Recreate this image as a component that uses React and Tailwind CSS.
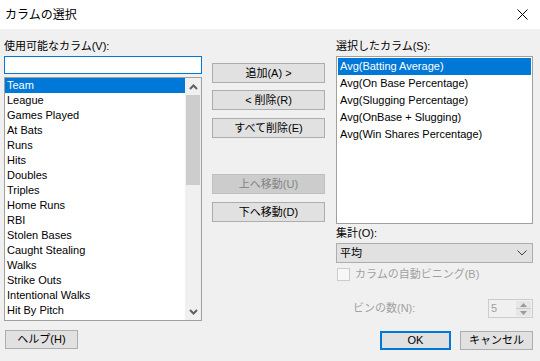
// Column chooser dialog
// title bar, available columns list, move buttons, selected columns, aggregate + binning options

const available = [
  "Team",
  "League",
  "Games Played",
  "At Bats",
  "Runs",
  "Hits",
  "Doubles",
  "Triples",
  "Home Runs",
  "RBI",
  "Stolen Bases",
  "Caught Stealing",
  "Walks",
  "Strike Outs",
  "Intentional Walks",
  "Hit By Pitch",
];

const selected = [
  "Avg(Batting Average)",
  "Avg(On Base Percentage)",
  "Avg(Slugging Percentage)",
  "Avg(OnBase + Slugging)",
  "Avg(Win Shares Percentage)",
];

const Button = ({ children, className = "", disabled = false }) => (
  <div
    className={`flex items-center justify-center border ${
      disabled
        ? "bg-[#cccccc] border-[#bfbfbf] text-[#838383]"
        : "bg-[#e1e1e1] border-[#adadad] text-black"
    } ${className}`}
  >
    {children}
  </div>
);

const Chevron = ({ up }) => (
  <svg width="9" height="6" viewBox="0 0 9 6">
    <path
      d={up ? "M1 5 L4.5 1.5 L8 5" : "M1 1 L4.5 4.5 L8 1"}
      fill="none"
      stroke="#606060"
      strokeWidth="2"
    />
  </svg>
);

export default function App() {
  return (
    <div
      className="w-[540px] h-[361px] flex flex-col bg-[#f0f0f0] text-[11px] text-black overflow-hidden"
      style={{ fontFamily: '"Liberation Sans", "Noto Sans CJK JP", sans-serif' }}
    >
      {/* title bar */}
      <div className="h-[29px] bg-white flex items-center justify-between pl-[5px] pr-[12px]">
        <span className="text-[12px] leading-none">カラムの選択</span>
        <svg width="11" height="11" viewBox="0 0 11 11">
          <path d="M0.5 0.5 L10.5 10.5 M10.5 0.5 L0.5 10.5" stroke="#000" strokeWidth="1" />
        </svg>
      </div>

      <div className="flex pt-[10px] pl-[4px]">
        {/* left column */}
        <div className="w-[198px] flex flex-col">
          <div className="h-[15px] leading-[15px]">使用可能なカラム(V):</div>
          <div className="mt-[2px] h-[18px] border border-[#0078d7] bg-white" />
          <div className="mt-[3px] h-[244px] border border-[#a0a0a0] bg-white flex">
            <div className="flex-1 flex flex-col">
              {available.map((name, i) => (
                <div
                  key={name}
                  className={`h-[15px] leading-[15px] pl-[2px] text-[11px] ${
                    i === 0 ? "bg-[#0078d7] text-white" : ""
                  }`}
                >
                  {name}
                </div>
              ))}
            </div>
            {/* scrollbar */}
            <div className="w-[16px] bg-[#f0f0f0] flex flex-col">
              <div className="h-[17px] flex items-center justify-center">
                <Chevron up />
              </div>
              <div className="h-[90px] mx-px bg-[#cdcdcd]" />
              <div className="flex-1" />
              <div className="h-[17px] flex items-center justify-center">
                <Chevron />
              </div>
            </div>
          </div>
          <Button className="mt-[9px] ml-px w-[73px] h-[19px]">ヘルプ(H)</Button>
        </div>

        {/* middle buttons */}
        <div className="w-[113px] ml-[10px] flex flex-col pt-[24px]">
          <Button className="h-[20px]">追加(A) &gt;</Button>
          <Button className="h-[20px] mt-[7px]">&lt; 削除(R)</Button>
          <Button className="h-[20px] mt-[8px]">すべて削除(E)</Button>
          <Button className="h-[20px] mt-[36px]" disabled>
            上へ移動(U)
          </Button>
          <Button className="h-[20px] mt-[8px]">下へ移動(D)</Button>
        </div>

        {/* right column */}
        <div className="w-[197px] ml-[11px] flex flex-col">
          <div className="h-[15px] leading-[15px]">選択したカラム(S):</div>
          <div className="mt-[2px] h-[168px] border border-[#a0a0a0] bg-white p-px flex flex-col">
            {selected.map((name, i) => (
              <div
                key={name}
                className={`h-[17px] leading-[17px] pl-[2px] ${
                  i === 0 ? "bg-[#0078d7] text-white" : ""
                }`}
              >
                {name}
              </div>
            ))}
          </div>
          <div className="mt-[2px] h-[15px] leading-[15px]">集計(O):</div>
          <div className="mt-[2px] h-[20px] border border-[#adadad] bg-[#e1e1e1] flex items-center justify-between pl-[3px] pr-[5px]">
            <span>平均</span>
            <svg width="10" height="6" viewBox="0 0 10 6">
              <path d="M0.5 0.5 L5 5 L9.5 0.5" fill="none" stroke="#404040" strokeWidth="1" />
            </svg>
          </div>
          <div className="mt-[4px] flex items-center h-[15px] text-[#a0a0a0]">
            <div className="w-[13px] h-[13px] ml-px border border-[#cccccc] bg-[#f7f7f7]" />
            <span className="ml-[5px]">カラムの自動ビニング(B)</span>
          </div>
          <div className="mt-[17px] flex items-center justify-between h-[19px]">
            <span className="ml-[17px] text-[#a0a0a0]">ビンの数(N):</span>
            <div className="w-[45px] h-[19px] border border-[#cccccc] bg-[#f0f0f0] flex">
              <span className="flex-1 pl-[2px] leading-[17px] text-[#a0a0a0]">5</span>
              <div className="w-[15px] flex flex-col my-px mr-px">
                <div className="flex-1 bg-[#e6e6e6] border-b border-[#cccccc] flex items-center justify-center">
                  <svg width="7" height="4" viewBox="0 0 7 4">
                    <path d="M0 4 L3.5 0 L7 4 Z" fill="#9a9a9a" />
                  </svg>
                </div>
                <div className="flex-1 bg-[#e6e6e6] flex items-center justify-center">
                  <svg width="7" height="4" viewBox="0 0 7 4">
                    <path d="M0 0 L3.5 4 L7 0 Z" fill="#9a9a9a" />
                  </svg>
                </div>
              </div>
            </div>
          </div>
          <div className="mt-[13px] flex justify-end gap-[9px]">
            <div className="w-[71px] h-[19px] border-2 border-[#0078d7] bg-[#e1e1e1] flex items-center justify-center">
              OK
            </div>
            <Button className="w-[73px] h-[19px]">キャンセル</Button>
          </div>
        </div>
      </div>
    </div>
  );
}
